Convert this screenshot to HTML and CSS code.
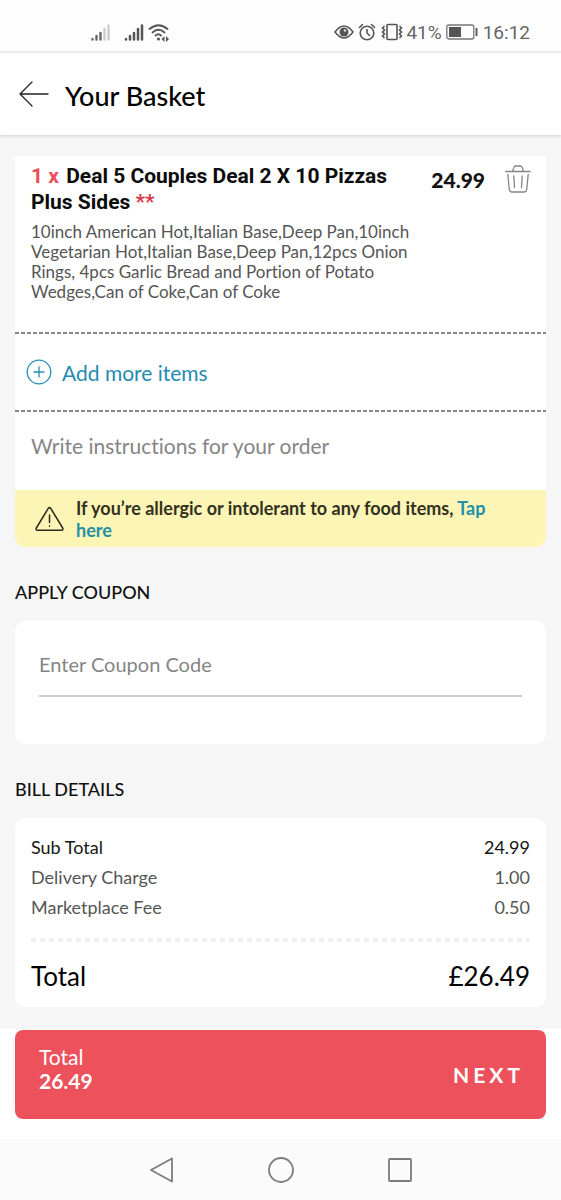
FILE: index.html
```html
<!DOCTYPE html>
<html lang="en">
<head>
<meta charset="utf-8">
<meta name="viewport" content="width=device-width, initial-scale=1">
<title>Your Basket</title>
<link rel="stylesheet" href="styles.css">
</head>
<body>
<div class="screen">
  <div class="status">
    <div class="status-group status-signals">
      <svg width="20" height="20" viewBox="0 0 20 20" fill="none" stroke-width="2.4" stroke-linecap="round"><path stroke="#666" d="M2.5 17v.5M6.5 14v3.500M10.500 11v6.500"/><path stroke="#ccc" d="M14.500 7v10.500M18.500 3.500v14"/></svg>
      <svg width="20" height="20" viewBox="0 0 20 20" fill="none" stroke="#555" stroke-width="2.500" stroke-linecap="round"><path d="M2 17v.5M6 14v3.500M10 11v6.500M14 7v10.500M18 3.500v14"/></svg>
      <svg width="22" height="20" viewBox="0 0 22 20" fill="none" stroke="#555" stroke-width="1.800" stroke-linecap="round"><path d="M1.500 7Q10.500-.5 19.500 7M4.500 10.500Q10.500 5 16.500 10.500M7.500 13.500Q10.500 11 13 13.500"/><circle cx="10.500" cy="17" r="1.600" fill="#555" stroke="none"/><path fill="#555" stroke="none" d="M16.500 14v6l-3-3zM18 14v6l3-3z"/></svg>
    </div>
    <div class="status-group">
      <svg width="20" height="20" viewBox="0 0 20 20" fill="none" stroke="#555" stroke-width="1.500"><path d="M1 10Q5.500 4 10 4t9 6q-4.500 6-9 6T1 10z"/><circle cx="10" cy="10" r="4.500" fill="#555" stroke="none"/><circle cx="11" cy="8.500" r="1.200" fill="#ddd" stroke="none"/></svg>
      <svg class="status-clock" width="18" height="20" viewBox="0 0 18 20" fill="none" stroke="#555" stroke-width="1.600" stroke-linecap="round"><circle cx="9" cy="11" r="6.800"/><path d="M9 7.500V11l2.500 2.500M1.500 5.500L4.500 2.500M13.500 2.500l3 3"/></svg>
      <svg width="24" height="20" viewBox="0 0 24 20" fill="none" stroke="#555" stroke-width="1.600"><rect x="7" y="2.500" width="10" height="15" rx="1"/><path d="M4.500 4L2.500 6l2 2-2 2 2 2-2 2 2 2M19.500 4l2 2-2 2 2 2-2 2 2 2-2 2"/></svg>
      <span class="status-percent">41%</span>
      <svg class="status-battery" width="33" height="20" viewBox="0 0 33 20"><rect x=".8" y="3" width="27" height="14" rx="2" fill="none" stroke="#777" stroke-width="1.300"/><path fill="#555" d="M3 5h12v10H3z"/><path stroke="#555" stroke-width="1.800" d="M30.500 6v8"/></svg>
      <span>16:12</span>
    </div>
  </div>

  <header class="header">
    <button class="icon-button" type="button" aria-label="Back"><svg width="30" height="28" viewBox="0 0 30 28" fill="none" stroke="#222" stroke-width="1.300" stroke-linecap="round" stroke-linejoin="round"><path d="M13 2L1 14l12 12M1 14h28"/></svg></button>
    <h1 class="title">Your Basket</h1>
  </header>

  <main class="content">
    <section class="basket">
      <div class="item">
        <div class="item-text">
          <h2 class="item-name"><span class="quantity">1 x</span> Deal 5 Couples Deal 2 X 10 Pizzas Plus Sides <span class="stars">**</span></h2>
          <p class="item-detail">10inch American Hot,Italian Base,Deep Pan,10inch Vegetarian Hot,Italian Base,Deep Pan,12pcs Onion Rings, 4pcs Garlic Bread and Portion of Potato Wedges,Can of Coke,Can of Coke</p>
        </div>
        <div class="item-side">
          <span class="item-price">24.99</span>
          <button class="icon-button" type="button" aria-label="Remove item"><svg width="26" height="28" viewBox="0 0 26 28" fill="none" stroke="#858585" stroke-width="1.300" stroke-linecap="round"><path d="M.8 6.500h24.400M7.500 6.500l1.300-3.800Q9.200 1 11 1h4q1.800 0 2.300 1.700l1.200 3.800M2.800 9.500l1.500 15Q4.500 27 7 27h12q2.500 0 2.700-2.500l1.500-15M8.800 11l.7 11.500M17.200 11l-.7 11.500"/></svg></button>
        </div>
      </div>
      <button class="add" type="button">
        <svg width="26" height="26" viewBox="0 0 26 26" fill="none" stroke="#2390b4" stroke-width="1.300"><circle cx="13" cy="13" r="11.800"/><path d="M13 7.500v11M7.500 13h11"/></svg>
        Add more items
      </button>
      <textarea class="instructions" rows="1" aria-label="Order instructions" placeholder="Write instructions for your order"></textarea>
      <div class="allergy">
        <svg class="allergy-icon" width="29" height="26" viewBox="0 0 29 26" fill="none" stroke="#2b2a1c" stroke-width="1.500" stroke-linecap="round" stroke-linejoin="round"><path d="M13.300 2.300Q14.500.8 15.700 2.300L27.700 22q.8 2-1.200 2.300h-24Q.5 24 1.300 22zM14.500 9v7.500M14.500 20v.3"/></svg>
        <p class="allergy-text">If you’re allergic or intolerant to any food items, <a class="allergy-link" href="#">Tap here</a></p>
      </div>
    </section>

    <h2 class="section-title"><label for="coupon">APPLY COUPON</label></h2>
    <section class="card coupon">
      <input class="coupon-input" id="coupon" type="text" placeholder="Enter Coupon Code">
    </section>

    <h2 class="section-title" id="bill-title">BILL DETAILS</h2>
    <section class="card bill">
      <table class="bill-table" aria-labelledby="bill-title">
        <tbody>
          <tr class="subtotal"><th scope="row">Sub Total</th><td>24.99</td></tr>
          <tr><th scope="row">Delivery Charge</th><td>1.00</td></tr>
          <tr><th scope="row">Marketplace Fee</th><td>0.50</td></tr>
        </tbody>
        <tfoot>
          <tr><th scope="row">Total</th><td>£26.49</td></tr>
        </tfoot>
      </table>
    </section>
  </main>

  <footer class="checkout">
    <button class="next" type="button">
      <span class="next-total">Total<strong class="next-amount">26.49</strong></span>
      <span class="next-label">NEXT</span>
    </button>
  </footer>

  <nav class="system" aria-label="System navigation">
    <button class="icon-button" type="button" aria-label="Back"><svg width="28" height="28" viewBox="0 0 28 28" fill="none" stroke="#7d7d7d" stroke-width="1.800" stroke-linejoin="round"><path d="M3 14L24 2.500v23z"/></svg></button>
    <button class="icon-button" type="button" aria-label="Home"><svg width="28" height="28" viewBox="0 0 28 28" fill="none" stroke="#7d7d7d" stroke-width="1.800"><circle cx="14" cy="14" r="12"/></svg></button>
    <button class="icon-button" type="button" aria-label="Recent apps"><svg width="28" height="28" viewBox="0 0 28 28" fill="none" stroke="#7d7d7d" stroke-width="1.800"><rect x="3" y="3" width="22" height="22" rx="1"/></svg></button>
  </nav>
</div>
</body>
</html>
```

FILE: styles.css
```css
* { box-sizing: border-box; }

body {
  margin: 0;
  background: #fbfbfb;
  color: #111;
  font-family: Lato, "Open Sans", sans-serif;
  font-size: 18px;
  font-variant-ligatures: none;
}

h1, h2, p { margin: 0; }

button, input, textarea {
  font-family: inherit;
  font-variant-ligatures: none;
}

svg { display: block; flex: none; }

.screen {
  display: flex;
  flex-direction: column;
  min-height: 100vh;
}

.icon-button {
  display: flex;
  padding: 0;
  border: 0;
  background: none;
}

/* Status bar */
.status {
  display: flex;
  align-items: center;
  justify-content: space-between;
  padding: 14px 31px 1px 90px;
  height: 53px;
  background: #fdfdfd;
  border-bottom: 2px solid #f0f0f0;
  color: #666;
  font-family: Roboto, sans-serif;
  font-size: 19px;
}

.status-group { display: flex; align-items: center; }
.status-signals { gap: 4px; }
.status-signals svg:first-child { margin-right: 10px; }
.status-clock { margin: 0 4px; }
.status-percent { margin: 0 4px 0 2px; }
.status-battery { margin-right: 4px; }

/* Header */
.header {
  display: flex;
  align-items: center;
  gap: 16px;
  height: 82px;
  padding: 0 19px;
  background: #fff;
  box-shadow: 0 1px 3px rgba(0, 0, 0, .16);
  z-index: 1;
}

.title {
  padding-top: 4px;
  color: #000;
  font-size: 27px;
  font-weight: 500;
  line-height: 32px;
}

/* Content */
.content {
  flex: 1;
  padding: 21px 15px;
  background: #f6f6f6;
}

.card, .basket {
  background: #fff;
  border-radius: 10px;
}

.basket { border-radius: 0 0 10px 10px; }

.item {
  display: flex;
  justify-content: space-between;
  padding: 7px 15px 30px 16px;
}

.item-text { flex: 0 1 380px; }

.item-name {
  color: #0c0c0c;
  font-family: Roboto, sans-serif;
  font-size: 21px;
  font-weight: 700;
  line-height: 26px;
}

.quantity { margin-right: 2px; color: #e9505c; }
.stars { color: #d63a45; }

.item-detail {
  margin-top: 7px;
  color: #555;
  font-size: 17px;
  line-height: 20px;
}

.item-side {
  display: flex;
  align-items: flex-start;
  gap: 20px;
  padding-top: 2px;
}

.item-price {
  font-size: 21px;
  font-weight: 900;
  line-height: 30px;
}

.add, .instructions {
  display: block;
  width: 100%;
  border: 0;
  background: repeating-linear-gradient(90deg, #858585 0 4px, transparent 4px 6px) top / 100% 2px no-repeat;
}

.add {
  display: flex;
  align-items: center;
  gap: 10px;
  height: 78px;
  padding: 2px 11px 0;
  color: #1f8bb2;
  font-size: 21px;
  text-align: left;
}

.instructions {
  height: 80px;
  padding: 23px 16px;
  resize: none;
  outline: 0;
  overflow: hidden;
  color: #333;
  font-size: 21px;
  line-height: 26px;
}

.instructions::placeholder, .coupon-input::placeholder { color: #858585; opacity: 1; }

.allergy {
  display: flex;
  align-items: center;
  gap: 12px;
  padding: 7px 40px 6px 20px;
  border-radius: 0 0 10px 10px;
  background: #fdf5b5;
}

.allergy-text {
  color: #333120;
  font-size: 18px;
  font-weight: 700;
  line-height: 22px;
}

.allergy-link { color: #2390a8; text-decoration: none; }

.section-title {
  margin: 33px 0 17px;
  font-size: 18px;
  font-weight: 500;
  line-height: 24px;
}

.coupon { padding: 24px; padding-bottom: 47px; }

.coupon-input {
  display: block;
  width: 100%;
  height: 52px;
  padding: 0 0 12px;
  border: 0;
  border-bottom: 2px solid #ccc;
  outline: 0;
  background: none;
  font-size: 20px;
}

.bill { padding: 14px 16px 16px; }

.bill-table {
  width: 100%;
  border-collapse: collapse;
  color: #555;
  line-height: 30px;
}

.bill-table th { padding: 0; font-weight: 400; text-align: left; }
.bill-table td { padding: 0; text-align: right; }
.subtotal { color: #151515; }

.bill-table tbody::after {
  content: "";
  display: block;
  height: 16px;
}

.bill-table tfoot {
  background: repeating-linear-gradient(90deg, #efefef 0 5px, transparent 5px 9px) top / 100% 4px no-repeat;
  color: #000;
  font-size: 26px;
}

.bill-table tfoot th, .bill-table tfoot td { padding-top: 23px; }

/* Checkout */
.checkout {
  padding: 1px 15px 20px;
  background: #fff;
}

.next {
  display: flex;
  align-items: center;
  justify-content: space-between;
  width: 100%;
  height: 89px;
  padding: 0 22px 0 24px;
  border: 0;
  border-radius: 8px;
  background: #ed515c;
  color: #fff;
  font-size: 21px;
  line-height: 24px;
  text-align: left;
}

.next-total { padding-bottom: 12px; }
.next-amount { display: block; }
.next-label { font-weight: 700; letter-spacing: 4px; }

/* System navigation */
.system {
  display: flex;
  align-items: center;
  justify-content: center;
  gap: 91px;
  height: 61px;
  background: #fbfbfb;
}
```
